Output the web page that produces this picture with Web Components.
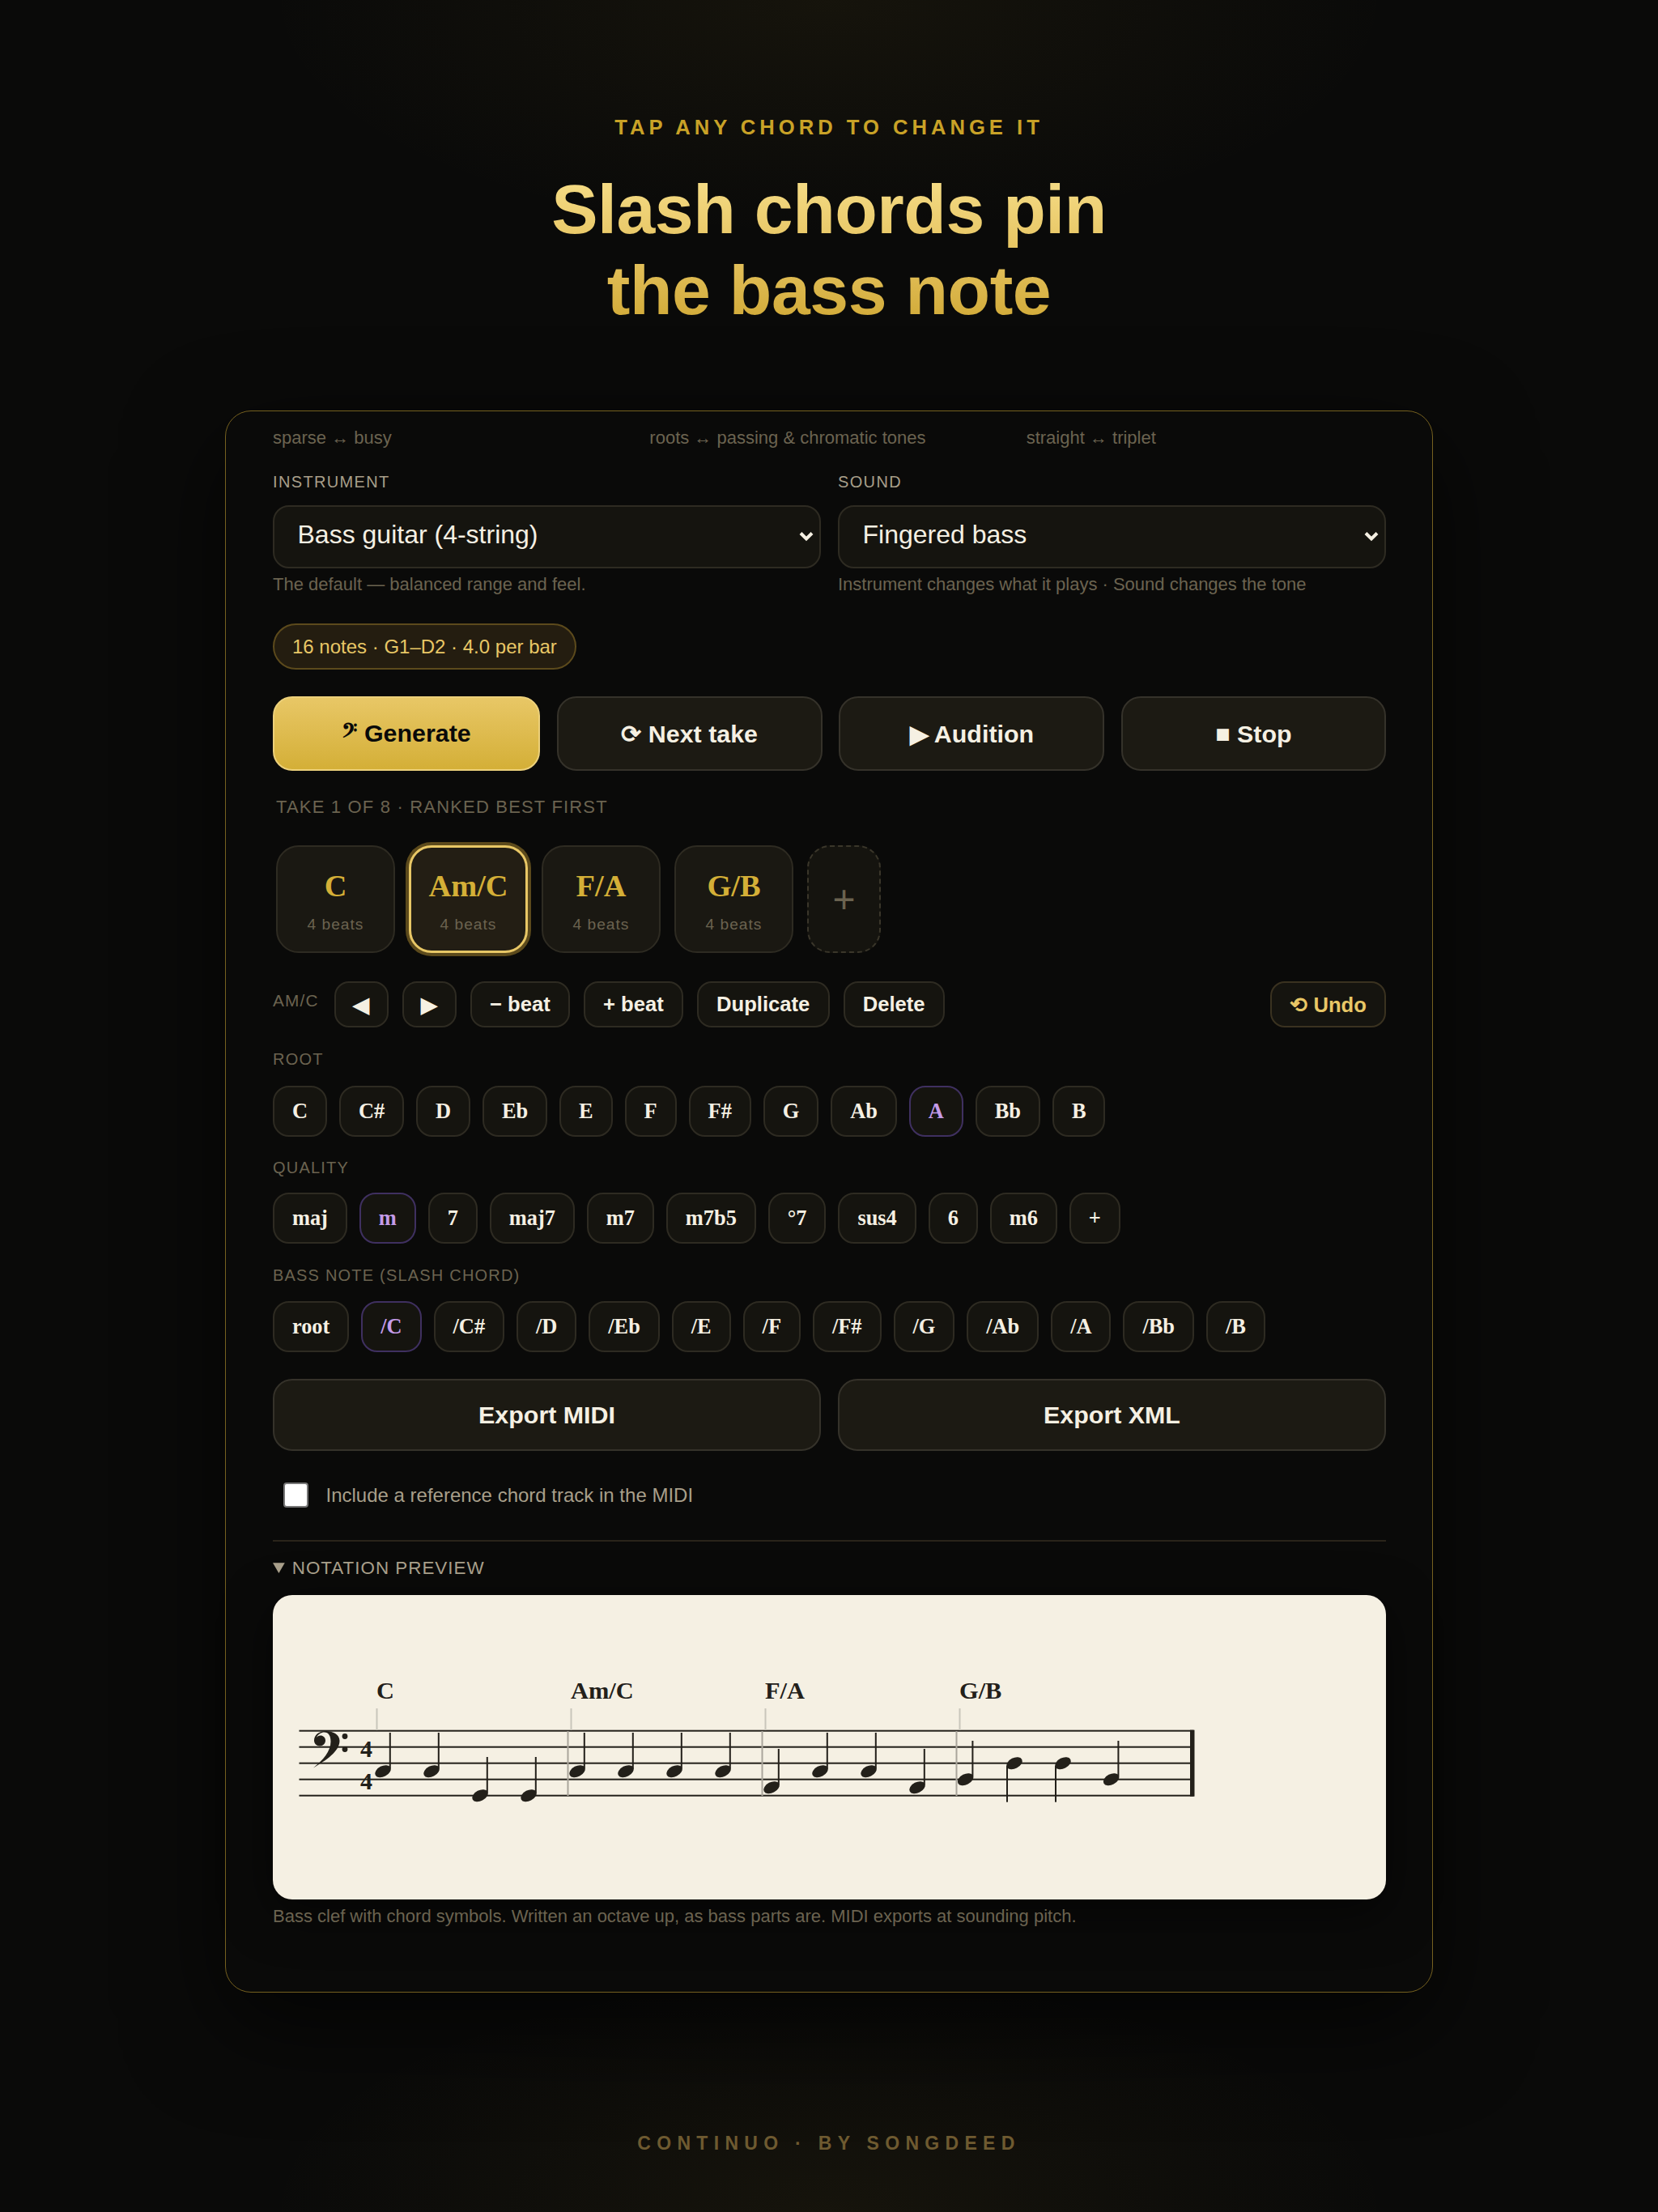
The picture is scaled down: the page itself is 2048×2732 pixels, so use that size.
<!doctype html>
<html lang="en">
<head>
<meta charset="utf-8">
<title>Continuo</title>
<style>
  html { background: #0a0a09; }
  body {
    margin: 0; min-height: 2732px; box-sizing: border-box;
    font-family: "Liberation Sans", Arial, sans-serif; color: #f5f0e3;
    background:
      radial-gradient(ellipse 1000px 420px at 50% 0, rgba(212,175,55,.06), transparent 70%),
      radial-gradient(ellipse 1000px 420px at 50% 100%, rgba(212,175,55,.06), transparent 70%),
      #0a0a09;
  }
</style>
</head>
<body>
  <cn-header eyebrow="TAP ANY CHORD TO CHANGE IT">Slash chords pin<br>the bass note</cn-header>

  <cn-card>
    <cn-hints></cn-hints>

    <cn-row cols="2" style="margin-top:29px">
      <cn-field label="INSTRUMENT" value="Bass guitar (4-string)" hint="The default — balanced range and feel."></cn-field>
      <cn-field label="SOUND" value="Fingered bass" hint="Instrument changes what it plays · Sound changes the tone"></cn-field>
    </cn-row>

    <cn-pill style="margin-top:35px">16 notes · G1–D2 · 4.0 per bar</cn-pill>

    <cn-row cols="4" style="margin-top:33px">
      <cn-btn primary>𝄢 Generate</cn-btn>
      <cn-btn>⟳ Next take</cn-btn>
      <cn-btn>▶ Audition</cn-btn>
      <cn-btn>■ Stop</cn-btn>
    </cn-row>

    <cn-caption style="margin:32px 0 0 4px" spaced>TAKE 1 OF 8 · RANKED BEST FIRST</cn-caption>

    <cn-strip style="margin-top:34px">
      <cn-tile name="C"></cn-tile>
      <cn-tile name="Am/C" selected></cn-tile>
      <cn-tile name="F/A"></cn-tile>
      <cn-tile name="G/B"></cn-tile>
      <cn-tile add name="+"></cn-tile>
    </cn-strip>

    <cn-toolbar style="margin-top:35px" label="AM/C">
      <cn-chip narrow>◀</cn-chip>
      <cn-chip narrow>▶</cn-chip>
      <cn-chip>− beat</cn-chip>
      <cn-chip>+ beat</cn-chip>
      <cn-chip>Duplicate</cn-chip>
      <cn-chip>Delete</cn-chip>
      <cn-chip undo>⟲ Undo</cn-chip>
    </cn-toolbar>

    <cn-pick style="margin-top:27px" label="ROOT" items="C,C#,D,Eb,E,F,F#,G,Ab,A,Bb,B" active="A" gap="21"></cn-pick>
    <cn-pick style="margin-top:26px" label="QUALITY" items="maj,m,7,maj7,m7,m7b5,°7,sus4,6,m6,+" active="m" gap="19"></cn-pick>
    <cn-pick style="margin-top:27px" label="BASS NOTE (SLASH CHORD)" items="root,/C,/C#,/D,/Eb,/E,/F,/F#,/G,/Ab,/A,/Bb,/B" active="/C" gap="20"></cn-pick>

    <cn-row cols="2" style="margin-top:33px">
      <cn-btn export>Export MIDI</cn-btn>
      <cn-btn export>Export XML</cn-btn>
    </cn-row>

    <cn-check style="margin-top:39px">Include a reference chord track in the MIDI</cn-check>

    <cn-preview style="margin-top:40px" title="NOTATION PREVIEW">
      <cn-notation></cn-notation>
    </cn-preview>

    <cn-caption style="margin-top:8px">Bass clef with chord symbols. Written an octave up, as bass parts are. MIDI exports at sounding pitch.</cn-caption>
  </cn-card>

  <cn-footer>CONTINUO · BY SONGDEED</cn-footer>

<script>
(function () {
  // small helper: every element is just a template in an open shadow root
  function el(name, css, html, setup) {
    customElements.define(name, class extends HTMLElement {
      connectedCallback() {
        if (this.shadowRoot) return;
        var root = this.attachShadow({ mode: 'open' });
        var h = typeof html === 'function' ? html(this) : html;
        root.innerHTML = '<style>' + css + '</style>' + h;
        if (setup) setup(this, root);
      }
    });
  }
  function attr(s) { return String(s).replace(/&/g, '&amp;').replace(/"/g, '&quot;'); }

  var SERIF = '"Liberation Serif","Times New Roman",serif';
  var SANS = '"Liberation Sans",Arial,sans-serif';

  el('cn-header', `
    :host{display:block;text-align:center;padding-top:144px}
    p{margin:0;font:700 25.6px/26px ${SANS};letter-spacing:5px;color:#c9a227}
    h1{margin:38px 0 0;font:700 86px/100px ${SANS};letter-spacing:-.45px;color:transparent;
       background:linear-gradient(180deg,#f7df8b 0%,#e8c766 45%,#cfa733 100%);
       -webkit-background-clip:text;background-clip:text;display:inline-block}
  `, function (me) { return '<p>' + attr(me.getAttribute('eyebrow')) + '</p><h1><slot></slot></h1>'; });

  el('cn-card', `
    :host{display:block;box-sizing:border-box;width:1492px;height:1954px;margin:99px auto 0;
      padding:20px 57px 0 58px;border:1px solid #75601f;border-radius:32px;background:#0a0a09;
      box-shadow:0 40px 120px rgba(0,0,0,.65)}
  `, '<slot></slot>');

  el('cn-hints', `
    :host{display:grid;grid-template-columns:repeat(3,1fr);column-gap:21px;
      font:22px/26px ${SANS};color:#6b6350}
  `, '<span>sparse ↔ busy</span><span>roots ↔ passing &amp; chromatic tones</span><span>straight ↔ triplet</span>');

  el('cn-row', `
    :host{display:grid;column-gap:21px}
    :host([cols="2"]){grid-template-columns:repeat(2,1fr)}
    :host([cols="4"]){grid-template-columns:330fr 328fr 328fr 327fr;column-gap:20.5px}
  `, '<slot></slot>');

  el('cn-field', `
    :host{display:block;min-width:0}
    label{display:block;font:20px/24px ${SANS};letter-spacing:1.35px;color:#a89f8a;margin-bottom:17px}
    .box{position:relative}
    select{display:block;width:100%;height:78px;box-sizing:border-box;padding:0 0 6px 28.5px;appearance:none;-webkit-appearance:none;
      font:32px ${SANS};color:#f5f0e3;background:#15140f;border:2px solid #2e2b22;border-radius:20px}
    svg{position:absolute;right:9px;top:33px;width:18px;height:12px;pointer-events:none}
    small{display:block;margin-top:7px;font:22px/26px ${SANS};color:#6b6350}
  `, function (me) {
    var v = attr(me.getAttribute('value'));
    return '<label>' + attr(me.getAttribute('label')) + '</label><div class="box"><select><option>' + v + '</option></select>' +
      '<svg viewBox="0 0 18 12"><path d="M2 1.5L9 8.5L16 1.5" fill="none" stroke="#f5f0e3" stroke-width="4"/></svg></div>' +
      '<small>' + attr(me.getAttribute('hint')) + '</small>';
  });

  el('cn-pill', `
    :host{display:inline-flex;align-items:center;box-sizing:border-box;height:57px;padding:0 22px;
      border:2px solid #5c4a1c;border-radius:29px;background:#241d10;
      font:24px ${SANS};color:#e8c766}
  `, '<slot></slot>');

  el('cn-btn', `
    :host{display:block}
    button{display:block;width:100%;height:92px;box-sizing:border-box;padding:0;
      font:700 30.4px ${SANS};color:#f5f0e3;background:#1c1a13;border:2px solid #35322a;border-radius:24px}
    :host([primary]) button{color:#0a0a09;border-color:#ecd07a;background:linear-gradient(180deg,#e8c766,#d4af37)}
    :host([export]) button{height:89px}
  `, '<button><slot></slot></button>');

  el('cn-caption', `
    :host{display:block;font:22px/26px ${SANS};color:#6b6350}
    :host([spaced]){letter-spacing:1.18px}
  `, '<slot></slot>');

  el('cn-strip', `:host{display:flex;gap:17px;padding-left:4px}`, '<slot></slot>');

  el('cn-tile', `
    :host{display:flex;flex-direction:column;align-items:center;box-sizing:border-box;width:147px;height:133px;
      background:#1a1812;border:2px solid #2e2b22;border-radius:28px}
    b{margin-top:24px;font:700 38.4px/48px ${SERIF};color:#d4af37}
    span{margin-top:12px;font:19.2px/24px ${SANS};letter-spacing:1px;color:#6b6350}
    :host([selected]){background:#231e14;border:3px solid #e8c766;box-shadow:0 0 0 4px #5c4a1c}
    :host([selected]) b{margin-top:23px}
    :host([add]){width:91px;justify-content:center;background:#15140f;border:2px dashed #3a362a}
    .plus{font:48px/56px ${SANS};color:#6b6350}
  `, function (me) {
    if (me.hasAttribute('add')) return '<div class="plus">+</div>';
    return '<b>' + attr(me.getAttribute('name')) + '</b><span>4 beats</span>';
  });

  el('cn-toolbar', `
    :host{display:flex;gap:17px;align-items:flex-start}
    em{font:normal 20.8px/24px ${SANS};letter-spacing:1.2px;color:#6b6350;margin:12px 2px 0 0}
  `, function (me) { return '<em>' + attr(me.getAttribute('label')) + '</em><slot></slot>'; });

  el('cn-chip', `
    :host{display:block}
    :host([undo]){margin-left:auto}
    button{display:block;height:57px;box-sizing:border-box;padding:0 22.2px;white-space:nowrap;
      font:700 25.6px ${SANS};color:#f5f0e3;background:#15140f;border:2px solid #2e2b22;border-radius:18px}
    :host([narrow]) button{width:67px;padding:0}
    :host([undo]) button{color:#e8c766;border-color:#3a3220}
    :host([pick]) button{height:63px;padding:0 21.95px;font:700 26.4px ${SERIF};border-radius:20px}
    :host([active]) button{color:#c49be8;border-color:#3f3060}
  `, '<button><slot></slot></button>');

  el('cn-pick', `
    :host{display:block}
    label{display:block;font:20px/24px ${SANS};letter-spacing:1.2px;color:#6b6350}
    div{display:flex;gap:15px}
  `, function (me) {
    var act = me.getAttribute('active');
    var chips = me.getAttribute('items').split(',').map(function (t) {
      return '<cn-chip pick' + (t === act ? ' active' : '') + '>' + attr(t) + '</cn-chip>';
    }).join('');
    return '<label>' + attr(me.getAttribute('label')) + '</label><div style="margin-top:' + me.getAttribute('gap') + 'px">' + chips + '</div>';
  });

  el('cn-check', `
    :host{display:flex;align-items:center;gap:22px;height:31px}
    input{appearance:none;-webkit-appearance:none;box-sizing:border-box;width:31px;height:31px;margin:0 0 0 12.5px;flex:none;
      background:#fff;border:2px solid #767676;border-radius:4px}
    span{font:24px/31px ${SANS};color:#a89f8a}
  `, '<input type="checkbox"><span><slot></slot></span>');

  el('cn-preview', `
    :host{display:block;border-top:2px solid #2a241a;padding-top:20px}
    summary{font:22.4px/26px ${SANS};letter-spacing:1px;color:#a89f8a}
    .body{margin-top:20px}
  `, function (me) { return '<details open><summary>' + attr(me.getAttribute('title')) + '</summary><div class="body"><slot></slot></div></details>'; });

  // staff drawn in page coordinates so the numbers read straight off the reference
  var LINES = [2137.7, 2157.7, 2177.7, 2197.7, 2217.7];
  var NOTES = [
    [473, 2187.7, 2140], [533, 2187.7, 2140], [593, 2217.7, 2170], [653, 2217.7, 2170],
    [713, 2187.7, 2140], [773, 2187.7, 2140], [833, 2187.7, 2140], [893, 2187.7, 2140],
    [953, 2207.7, 2160], [1013, 2187.7, 2140], [1073, 2187.7, 2140], [1133, 2207.7, 2160],
    [1192.6, 2197.7, 2150], [1253, 2177.7, 0], [1313, 2177.7, 0], [1372.6, 2197.7, 2150]
  ];
  var CHORDS = [['C', 465], ['Am/C', 705], ['F/A', 945], ['G/B', 1185]];
  var INK = '#23201a';

  function staff() {
    var s = '';
    LINES.forEach(function (y) { s += '<rect x="369.5" y="' + (y - 1) + '" width="1105" height="2" fill="' + INK + '"/>'; });
    s += '<rect x="1470" y="2136.7" width="5.5" height="82" fill="' + INK + '"/>';
    CHORDS.forEach(function (c) {
      s += '<rect x="' + (c[1] - .5) + '" y="2110" width="2" height="27" fill="#c9c6bb"/>';
      s += '<text x="' + c[1] + '" y="2098" class="ch">' + attr(c[0]) + '</text>';
      if (c[1] > 465) s += '<rect x="' + (c[1] - 4.5) + '" y="2138" width="2" height="80" fill="#aaa59b"/>';
    });
    s += '<path fill="' + INK + '" d="M387 2183.5C403 2174 419.5 2163 419.5 2150C419.5 2142 411 2138 402 2138C394 2138 388 2143 388 2149.5C388 2153.5 391 2156.5 395 2156.5C399 2156.5 402 2153.5 402 2149.5C402 2146 399 2143.5 396 2143.5C393.5 2143.5 392 2144.5 391 2146C392.5 2142 397 2139.5 400.5 2139.5C406 2139.5 408.5 2144 408.5 2151C408.5 2163 399 2174 387 2183.5Z"/>';
    s += '<circle cx="426" cy="2144.5" r="3.4" fill="' + INK + '"/><circle cx="426" cy="2160.5" r="3.4" fill="' + INK + '"/>';
    s += '<text x="445" y="2170" class="ts">4</text><text x="445" y="2210" class="ts">4</text>';
    NOTES.forEach(function (n) {
      s += '<ellipse cx="' + n[0] + '" cy="' + n[1] + '" rx="10.4" ry="6.6" transform="rotate(-27 ' + n[0] + ' ' + n[1] + ')" fill="' + INK + '"/>';
      if (n[2]) s += '<rect x="' + (n[0] + 7.8) + '" y="' + n[2] + '" width="2" height="' + (n[1] - 3 - n[2]) + '" fill="' + INK + '"/>';
      else s += '<rect x="' + (n[0] - 10) + '" y="' + (n[1] + 3) + '" width="2" height="' + 45 + '" fill="' + INK + '"/>';
    });
    return s;
  }

  el('cn-notation', `
    :host{display:block;height:376px;border-radius:24px;background:#f5f0e3;overflow:hidden;
      box-shadow:0 16px 60px rgba(0,0,0,.55)}
    svg{display:block;width:100%;height:100%}
    .ch{font:700 30.4px ${SERIF};fill:${INK}}
    .ts{font:700 30px ${SERIF};fill:${INK}}
  `, function () { return '<svg viewBox="337 1970 1375 376" role="img" aria-label="Bass clef staff">' + staff() + '</svg>'; });

  el('cn-footer', `
    :host{display:block;margin-top:173px;padding-bottom:72px;text-align:center;
      font:700 23px/26px ${SANS};letter-spacing:7.3px;color:#6e5a30}
  `, '<slot></slot>');
})();
</script>
</body>
</html>
